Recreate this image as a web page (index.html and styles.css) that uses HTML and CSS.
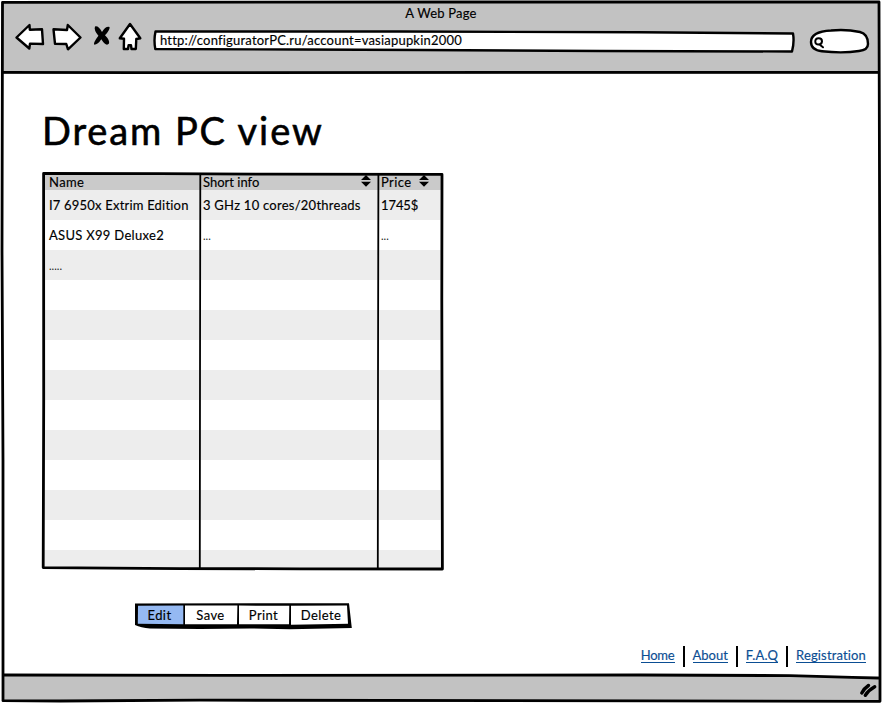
FILE: index.html
```html
<!DOCTYPE html>
<html lang="en">
<head>
<meta charset="utf-8">
<title>A Web Page</title>
<link rel="stylesheet" href="styles.css">
</head>
<body>
<div class="window">
  <header class="chrome">
    <div class="window-title"><span class="t-title">A Web Page</span></div>
    <div class="toolbar">
      <svg class="nav-icons" width="130" height="32" viewBox="14 21 130 32">
        <g class="sketch">
          <path d="M16.5 37.5 L29.5 25 L29.8 29.8 L42 29.3 L43 44 L30 43.6 L29.3 48.5 Z"/>
          <path d="M53.5 29.3 L67 30 L67.8 25 L80.5 37.5 L68 49.3 L66.3 44 L55 43.8 Z"/>
          <path d="M130 24 L140.3 38.3 L136.3 39 L135.8 49 L131.5 49 L131 45.3 L128.6 45.3 L128 49 L123.8 49 L124 38.8 L119.8 38.3 Z"/>
        </g>
        <path class="ink" d="M95 26.5 Q98.5 25.5 102 32 Q105.5 26 109.6 27 Q110 30 105 35.3 Q109.8 40 109 43.6 Q106 47 101.3 39.3 Q98 44.5 94.2 44.8 Q93 43 98.4 35.8 Q93.6 30 95 26.5 Z"/>
      </svg>
      <div class="address">
        <svg class="outline" width="644" height="24" viewBox="152 29 644 24"><path class="sketch" d="M155.5 31.4 L400 31.5 L640 32.3 L793 33.5 Q794.5 42 792 51.5 L600 51 L420 50 L300 49.5 L155.3 49 Q153.6 40 155.5 31.4 Z"/></svg>
        <span class="t-url">http://configuratorPC.ru/account=vasiapupkin2000</span>
      </div>
      <svg class="search" width="62" height="28" viewBox="808 27 62 28">
        <path class="sketch" d="M811 42 Q811 31.5 831 30.5 Q846 29 860 32 Q868 34 868 44 Q868 50 859 51 Q843 53.5 822 51.3 Q811 50 811 42 Z"/>
        <path class="glass" d="M815.3 42 Q815 38.3 818.7 38.3 Q822 38.3 822 41.5 Q821.5 44.5 818.5 44.5 Q815.5 44.5 815.3 42 M819.5 44.5 L823 47.3"/>
      </svg>
    </div>
  </header>

  <main class="content">
    <h1><span>Dream PC view</span></h1>
    <div class="table">
      <div class="row head"><div><span class="t-name">Name</span></div><div><span class="t-info">Short info</span><svg class="sort" width="10" height="12"><path d="M5 0 L10 5 H0 Z M0 6.8 H10 L5 11.8 Z"/></svg></div><div><span class="t-price">Price</span><svg class="sort" width="10" height="12"><path d="M5 0 L10 5 H0 Z M0 6.8 H10 L5 11.8 Z"/></svg></div></div>
      <div class="row"><div><span class="t-cpu">I7 6950x Extrim Edition</span></div><div><span class="t-spec">3 GHz 10 cores/20threads</span></div><div><span class="t-cost">1745$</span></div></div>
      <div class="row"><div><span class="t-board">ASUS X99 Deluxe2</span></div><div class="dots">...</div><div class="dots">...</div></div>
      <div class="row"><div class="dots">.....</div><div></div><div></div></div>
      <div class="row"></div><div class="row"></div><div class="row"></div><div class="row"></div><div class="row"></div>
      <div class="row"></div><div class="row"></div><div class="row"></div><div class="row"></div><div class="row last"></div>
      <svg class="outline" width="405" height="400" viewBox="40 171 405 400">
        <path class="rule" d="M43.6 173.4 L160 173.6 L270 174.2 L442 174.4 L441.8 300 L442.4 569 L300 568.8 L180 568.6 L43.2 567.6 L43.7 400 Z"/>
        <path class="divider" d="M200.3 174 L200 380 L199.8 568 M378.4 174 L378 380 L377.8 569"/>
      </svg>
    </div>
    <div class="buttons">
      <svg class="outline" width="220" height="30" viewBox="134 601 220 30">
        <path class="ink" d="M135 602.5 L349 602.2 L351.8 627 L290 628.3 L250 627.5 L200 628 L150 627.5 Q141 626.5 135 624 Z"/>
        <path class="active" d="M138 604.8 L183.3 604.6 L183.3 623.2 L137.8 622.8 Z"/>
        <path class="face" d="M185 604.6 L237.4 604.6 L237 623.3 L185 623.2 Z M239 604.6 L289.3 604.7 L289 623.3 L239 623.3 Z M291 604.8 L347 604.6 L348 622.8 L291 623.8 Z"/>
      </svg>
      <span class="b-edit">Edit</span><span class="b-save">Save</span><span class="b-print">Print</span><span class="b-delete">Delete</span>
    </div>
    <nav class="links"><a class="l-home">Home</a><i></i><a class="l-about">About</a><i></i><a class="l-faq">F.A.Q</a><i></i><a class="l-reg">Registration</a></nav>
  </main>

  <footer class="statusbar"></footer>
  <svg class="frame" width="882" height="703" viewBox="0 0 882 703">
    <path class="shade" d="M3 675.5 H500 L790 676 L879 678.5 V701 H3 Z"/>
    <path class="rule" d="M2.5 2.3 L440 2 L879 2 L880 350 L880 701.3 L650 700.8 L200 700.2 L60 701 L3 700.7 L3 460 L2 250 Z"/>
    <path class="rule" d="M3 72.3 L140 72.7 L500 72.4 L880 72.3 M3 675 L220 675.4 L640 675 L790 675.6 L879 678.2"/>
    <path class="grip" d="M861.8 693 Q864 688.5 868.5 685.5 M865.3 695.3 Q868.5 690 874.7 686.7"/>
  </svg>
</div>
</body>
</html>
```
FILE: styles.css
```css
* { box-sizing: border-box; }
body { margin: 0; background: #fff; color: #000; font: 13px/16px Lato, "Open Sans", sans-serif; -webkit-text-stroke: .15px currentColor; }
svg { display: block; flex: none; }
span, a { white-space: nowrap; }
.window { position: relative; width: 882px; height: 703px; display: grid; grid-template-rows: 74px 602px 27px; overflow: hidden; }
.chrome { margin: 2px 2px 0 3px; background: #c2c2c2; padding-top: 3px; }
.window-title { text-align: center; height: 16px; margin-right: 1px; }
.toolbar { display: flex; align-items: flex-start; padding-left: 11px; }
.address { position: relative; width: 644px; height: 24px; margin: 8px 0 0 8px; padding: 3px 0 0 8px; }
.address span { position: relative; display: block; }
.outline { position: absolute; left: 0; top: 0; pointer-events: none; }
.search { margin: 6px 0 0 12px; }
.sketch { fill: #fff; stroke: #000; stroke-width: 2.4; stroke-linejoin: round; }
.ink { fill: #000; }
.glass { fill: none; stroke: #000; stroke-width: 2; stroke-linecap: round; }
.content { display: flex; flex-direction: column; align-items: flex-start; padding: 33px 15px 0 42px; }
h1 { margin: 0; height: 64px; font-size: 38px; line-height: 46px; font-weight: 400; letter-spacing: 1.9px; -webkit-text-stroke: .6px #000; }
.table { position: relative; width: 401px; height: 398px; margin: 2px 0 0; padding: 1px 1px 0 2px; }
.table .outline { left: -2px; top: -2px; }
.row { display: grid; grid-template-columns: 156px 178px 64px; height: 30px; align-items: center; }
.row:nth-child(even) { background: #ededed; }
.row > div { padding-left: 5px; display: flex; align-items: center; height: 100%; }
.row > div + div { padding-left: 3px; }
.row.head { height: 16px; background: #cacaca; }
.row.last { height: 18px; }
.row .dots { letter-spacing: 0; color: #222; -webkit-text-stroke: 0; font-size: 11px; padding-top: 1px; }
.head .sort { margin: -3px 7px 0 auto; fill: #000; }
.head div:last-child .sort { margin-right: 13px; }
.rule { fill: none; stroke: #000; stroke-width: 2.8; stroke-linejoin: round; }
.divider { fill: none; stroke: #000; stroke-width: 1.8; }
.buttons { position: relative; display: flex; width: 217px; height: 26px; margin: 31px 0 0 93px; }
.buttons .outline { left: -1px; top: 0; }
.buttons > span { position: relative; height: 26px; line-height: 27px; text-align: center; }
.b-edit { width: 49px; } .b-save { width: 53px; } .b-print { width: 53px; } .b-delete { width: 62px; }
.active { fill: #95b9f2; }
.face { fill: #fff; }
.links { align-self: flex-end; display: flex; align-items: center; height: 22px; margin-top: 17px; margin-right: 1px; }
.links a { color: #0b4e93; border-bottom: 1px solid #0b4e93; line-height: 14px; margin-top: -1px; }
.links i { width: 2px; height: 21px; background: #000; margin: 0 8px; }
.statusbar { background: #c2c2c2; margin: 0 2px 2px 3px; }
.frame { position: absolute; inset: 0; pointer-events: none; }
.shade { fill: #c2c2c2; }
.grip { fill: none; stroke: #000; stroke-width: 3.4; stroke-linecap: round; }
.t-title { letter-spacing: .2px; }
.t-url { letter-spacing: .21px; }
.t-name, .buttons { letter-spacing: .4px; }
.t-info { letter-spacing: 0; }
.t-price { letter-spacing: .4px; }
.t-cpu { letter-spacing: .2px; }
.t-spec { letter-spacing: .25px; }
.t-board { letter-spacing: .3px; }
.t-cost { letter-spacing: -.1px; }
.l-home { letter-spacing: -.2px; }
.l-about { letter-spacing: 0; }
.l-faq { letter-spacing: .2px; }
.l-reg { letter-spacing: .15px; }
```
